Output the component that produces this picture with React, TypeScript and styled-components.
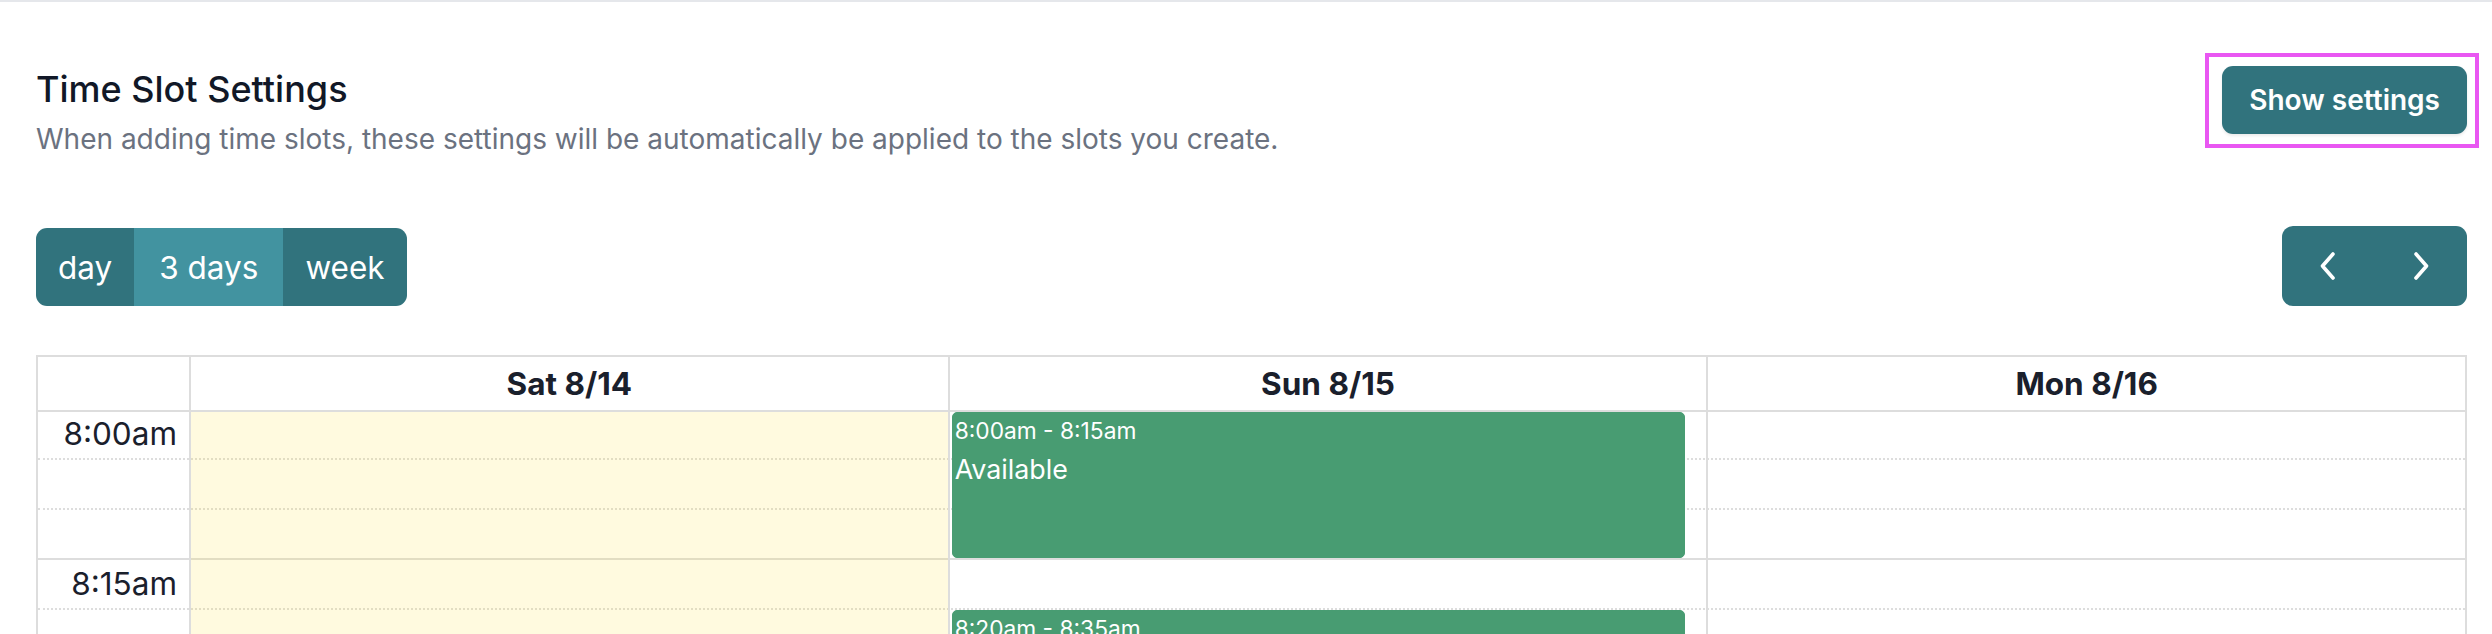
import styled, { createGlobalStyle } from "styled-components";

const GlobalStyle = createGlobalStyle`
  html, body {
    margin: 0;
    padding: 0;
    background: #ffffff;
    overflow: hidden;
  }
  body {
    font-family: Inter, "Noto Sans", sans-serif;
  }
  * {
    box-sizing: border-box;
  }
`;

const TEAL = "#31737d";
const TEAL_ACTIVE = "#4293a0";
const GRID = "#dddddd";
const SLOT_HEIGHT = 50;

const Page = styled.div`
  border-top: 2px solid #e5e7eb;
  padding: 63px 25px 0 36px;
`;

const Header = styled.header`
  display: flex;
  justify-content: space-between;
  align-items: flex-start;
`;

const Title = styled.h2`
  margin: 0;
  font-size: 36px;
  line-height: 49px;
  font-weight: 500;
  color: #111827;
`;

const Subtitle = styled.p`
  margin: 4px 0 0;
  font-size: 28px;
  line-height: 42px;
  color: #6b7280;
`;

const SettingsButton = styled.button`
  position: relative;
  margin-top: 1px;
  height: 68px;
  padding: 0 27px;
  border: none;
  border-radius: 11px;
  background: ${TEAL};
  color: #ffffff;
  font-family: Inter, sans-serif;
  font-size: 28px;
  font-weight: 600;
  box-shadow: 0 2px 3px rgba(0, 0, 0, 0.08);

  &::after {
    content: "";
    position: absolute;
    top: -13px;
    left: -17px;
    right: -12px;
    bottom: -14px;
    border: 4px solid #e957f2;
    pointer-events: none;
  }
`;

const Toolbar = styled.div`
  display: flex;
  justify-content: space-between;
  align-items: flex-end;
  margin-top: 66px;
`;

const ButtonGroup = styled.div`
  display: flex;
  border-radius: 11px;
  overflow: hidden;
`;

const ViewButton = styled.button<{ $active?: boolean }>`
  height: 78px;
  padding: 0 ${(p) => (p.$active ? 25 : 22)}px;
  border: none;
  background: ${(p) => (p.$active ? TEAL_ACTIVE : TEAL)};
  color: #ffffff;
  font-family: Inter, sans-serif;
  font-size: 31.5px;
  font-weight: 400;
`;

const NavButton = styled.button`
  display: flex;
  align-items: center;
  justify-content: center;
  width: 92.5px;
  height: 80px;
  border: none;
  background: ${TEAL};
`;

const Calendar = styled.div`
  margin-top: 49px;
  border: 2px solid ${GRID};
  border-bottom: none;
  font-size: 31.5px;
  color: #1a202c;
`;

const HeadRow = styled.div`
  display: grid;
  grid-template-columns: 151px repeat(3, 1fr);
  height: 55px;
  border-bottom: 2px solid ${GRID};
`;

const DayHead = styled.div`
  display: flex;
  align-items: center;
  justify-content: center;
  border-left: 2px solid ${GRID};
  font-weight: 700;
`;

const Body = styled.div`
  position: relative;
`;

const SlotRow = styled.div<{ $kind: "first" | "major" | "minor" }>`
  display: flex;
  height: ${(p) => (p.$kind === "first" ? 46 : 50)}px;
  border-top: ${(p) =>
    p.$kind === "first"
      ? "none"
      : p.$kind === "major"
      ? `2px solid ${GRID}`
      : `2px dotted ${GRID}`};
`;

const SlotLabel = styled.div<{ $first?: boolean }>`
  width: 151px;
  margin-top: ${(p) => (p.$first ? -2 : 0)}px;
  padding-right: 12px;
  text-align: right;
  line-height: 47px;
  color: #1a202c;
`;

const ColumnsLayer = styled.div`
  position: absolute;
  inset: 0;
  display: grid;
  grid-template-columns: 151px repeat(3, 1fr);
`;

const DayCol = styled.div<{ $today?: boolean }>`
  position: relative;
  border-left: 2px solid ${GRID};
  background: ${(p) => (p.$today ? "rgba(255, 220, 40, 0.15)" : "transparent")};
`;

const EventBox = styled.div`
  position: absolute;
  left: 2px;
  right: 2.8%;
  padding: 1px 2px;
  border: 1px solid #489c72;
  border-radius: 5px;
  background: #489c72;
  color: #ffffff;
  overflow: hidden;
`;

const EventTime = styled.div`
  margin-bottom: 1px;
  font-size: 22.75px;
  line-height: 1.5;
  white-space: nowrap;
`;

const EventTitle = styled.div`
  font-size: 26.8px;
  line-height: 1.5;
`;

const Chevron = ({ dir }: { dir: "left" | "right" }) => (
  <svg width="16" height="28" viewBox="0 0 16 28" fill="none">
    <polyline
      points={dir === "left" ? "13,2 2.5,14 13,26" : "3,2 13.5,14 3,26"}
      stroke="#ffffff"
      strokeWidth="3.6"
      strokeLinecap="round"
      strokeLinejoin="round"
    />
  </svg>
);

const days = [
  { label: "Sat 8/14", today: true },
  { label: "Sun 8/15", today: false },
  { label: "Mon 8/16", today: false },
];

const events = [
  { day: 1, start: 0, end: 3, time: "8:00am - 8:15am", title: "Available" },
  { day: 1, start: 4, end: 7, time: "8:20am - 8:35am", title: "Available" },
];

const slotLabel = (i: number) => {
  const minutes = i * 5;
  return `8:${String(minutes).padStart(2, "0")}am`;
};

// first row is 46px (header border sits above it), the rest are 50px incl. border
const slotTop = (slot: number) => (slot === 0 ? 0 : slot * SLOT_HEIGHT - 2);
const slotBottom = (slot: number) => slot * SLOT_HEIGHT - 4;

export default function App() {
  const slots = Array.from({ length: 12 }, (_, i) => i);

  return (
    <>
      <GlobalStyle />
      <Page>
        <Header>
          <div>
            <Title>Time Slot Settings</Title>
            <Subtitle>
              When adding time slots, these settings will be automatically be
              applied to the slots you create.
            </Subtitle>
          </div>
          <SettingsButton>Show settings</SettingsButton>
        </Header>

        <Toolbar>
          <ButtonGroup>
            <ViewButton>day</ViewButton>
            <ViewButton $active>3 days</ViewButton>
            <ViewButton>week</ViewButton>
          </ButtonGroup>
          <ButtonGroup>
            <NavButton aria-label="prev">
              <Chevron dir="left" />
            </NavButton>
            <NavButton aria-label="next">
              <Chevron dir="right" />
            </NavButton>
          </ButtonGroup>
        </Toolbar>

        <Calendar>
          <HeadRow>
            <div />
            {days.map((d) => (
              <DayHead key={d.label}>{d.label}</DayHead>
            ))}
          </HeadRow>
          <Body>
            {slots.map((i) => (
              <SlotRow
                key={i}
                $kind={i === 0 ? "first" : i % 3 === 0 ? "major" : "minor"}
              >
                <SlotLabel $first={i === 0}>
                  {i % 3 === 0 ? slotLabel(i) : ""}
                </SlotLabel>
              </SlotRow>
            ))}
            <ColumnsLayer>
              <div />
              {days.map((d, di) => (
                <DayCol key={d.label} $today={d.today}>
                  {events
                    .filter((e) => e.day === di)
                    .map((e) => {
                      const top = slotTop(e.start);
                      return (
                        <EventBox
                          key={e.time}
                          style={{ top, height: slotBottom(e.end) - top }}
                        >
                          <EventTime>{e.time}</EventTime>
                          <EventTitle>{e.title}</EventTitle>
                        </EventBox>
                      );
                    })}
                </DayCol>
              ))}
            </ColumnsLayer>
          </Body>
        </Calendar>
      </Page>
    </>
  );
}
